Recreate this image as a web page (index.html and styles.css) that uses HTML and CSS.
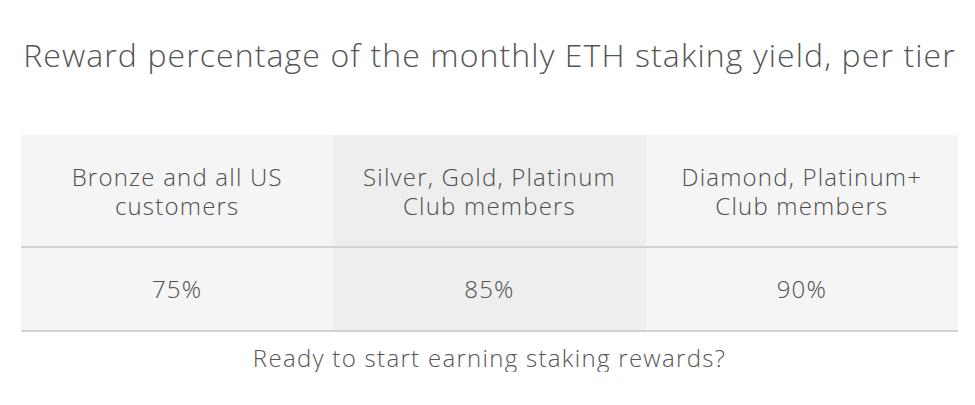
FILE: index.html
```html
<!DOCTYPE html>
<html lang="en">
<head>
<meta charset="utf-8">
<title>ETH staking rewards</title>
<link rel="stylesheet" href="styles.css">
</head>
<body>
<main class="page">
  <h2 class="title">Reward percentage of the monthly ETH staking yield, per tier</h2>
  <table class="tiers">
    <thead>
      <tr>
        <th>Bronze and all US<br>customers</th>
        <th class="mid">Silver, Gold, Platinum<br>Club members</th>
        <th>Diamond, Platinum+<br>Club members</th>
      </tr>
    </thead>
    <tbody>
      <tr>
        <td>75%</td>
        <td class="mid">85%</td>
        <td>90%</td>
      </tr>
    </tbody>
  </table>
  <p class="cta">Ready to start earning staking rewards?</p>
</main>
</body>
</html>
```

FILE: styles.css
```css
html, body {
  margin: 0;
  padding: 0;
  background: #ffffff;
}

.page {
  padding: 33px 17px 0 21px;
  font-family: "Open Sans", "DejaVu Sans", sans-serif;
  color: #555555;
}

.title {
  margin: 0 0 58px;
  font-size: 32px;
  line-height: 44px;
  font-weight: 300;
  letter-spacing: 1.1px;
  text-align: center;
  color: #555555;
}

.tiers {
  width: 100%;
  border-collapse: collapse;
  table-layout: fixed;
  background: #f5f5f5;
}

.tiers th,
.tiers td {
  font-size: 24px;
  line-height: 29px;
  font-weight: 300;
  letter-spacing: 1.2px;
  text-align: center;
  color: #4d4d4d;
  vertical-align: middle;
}

.tiers th {
  padding: 27px 8px 26px;
  border-bottom: 2px solid #d2d2d2;
}

.tiers td {
  padding: 26px 8px 27px;
  border-bottom: 2px solid #d2d2d2;
}

.tiers .mid {
  background: #eeeeee;
}

.cta {
  margin: 11px 0 0;
  font-size: 24px;
  line-height: 29px;
  font-weight: 300;
  letter-spacing: 1.3px;
  text-align: center;
  color: #555555;
}
```
